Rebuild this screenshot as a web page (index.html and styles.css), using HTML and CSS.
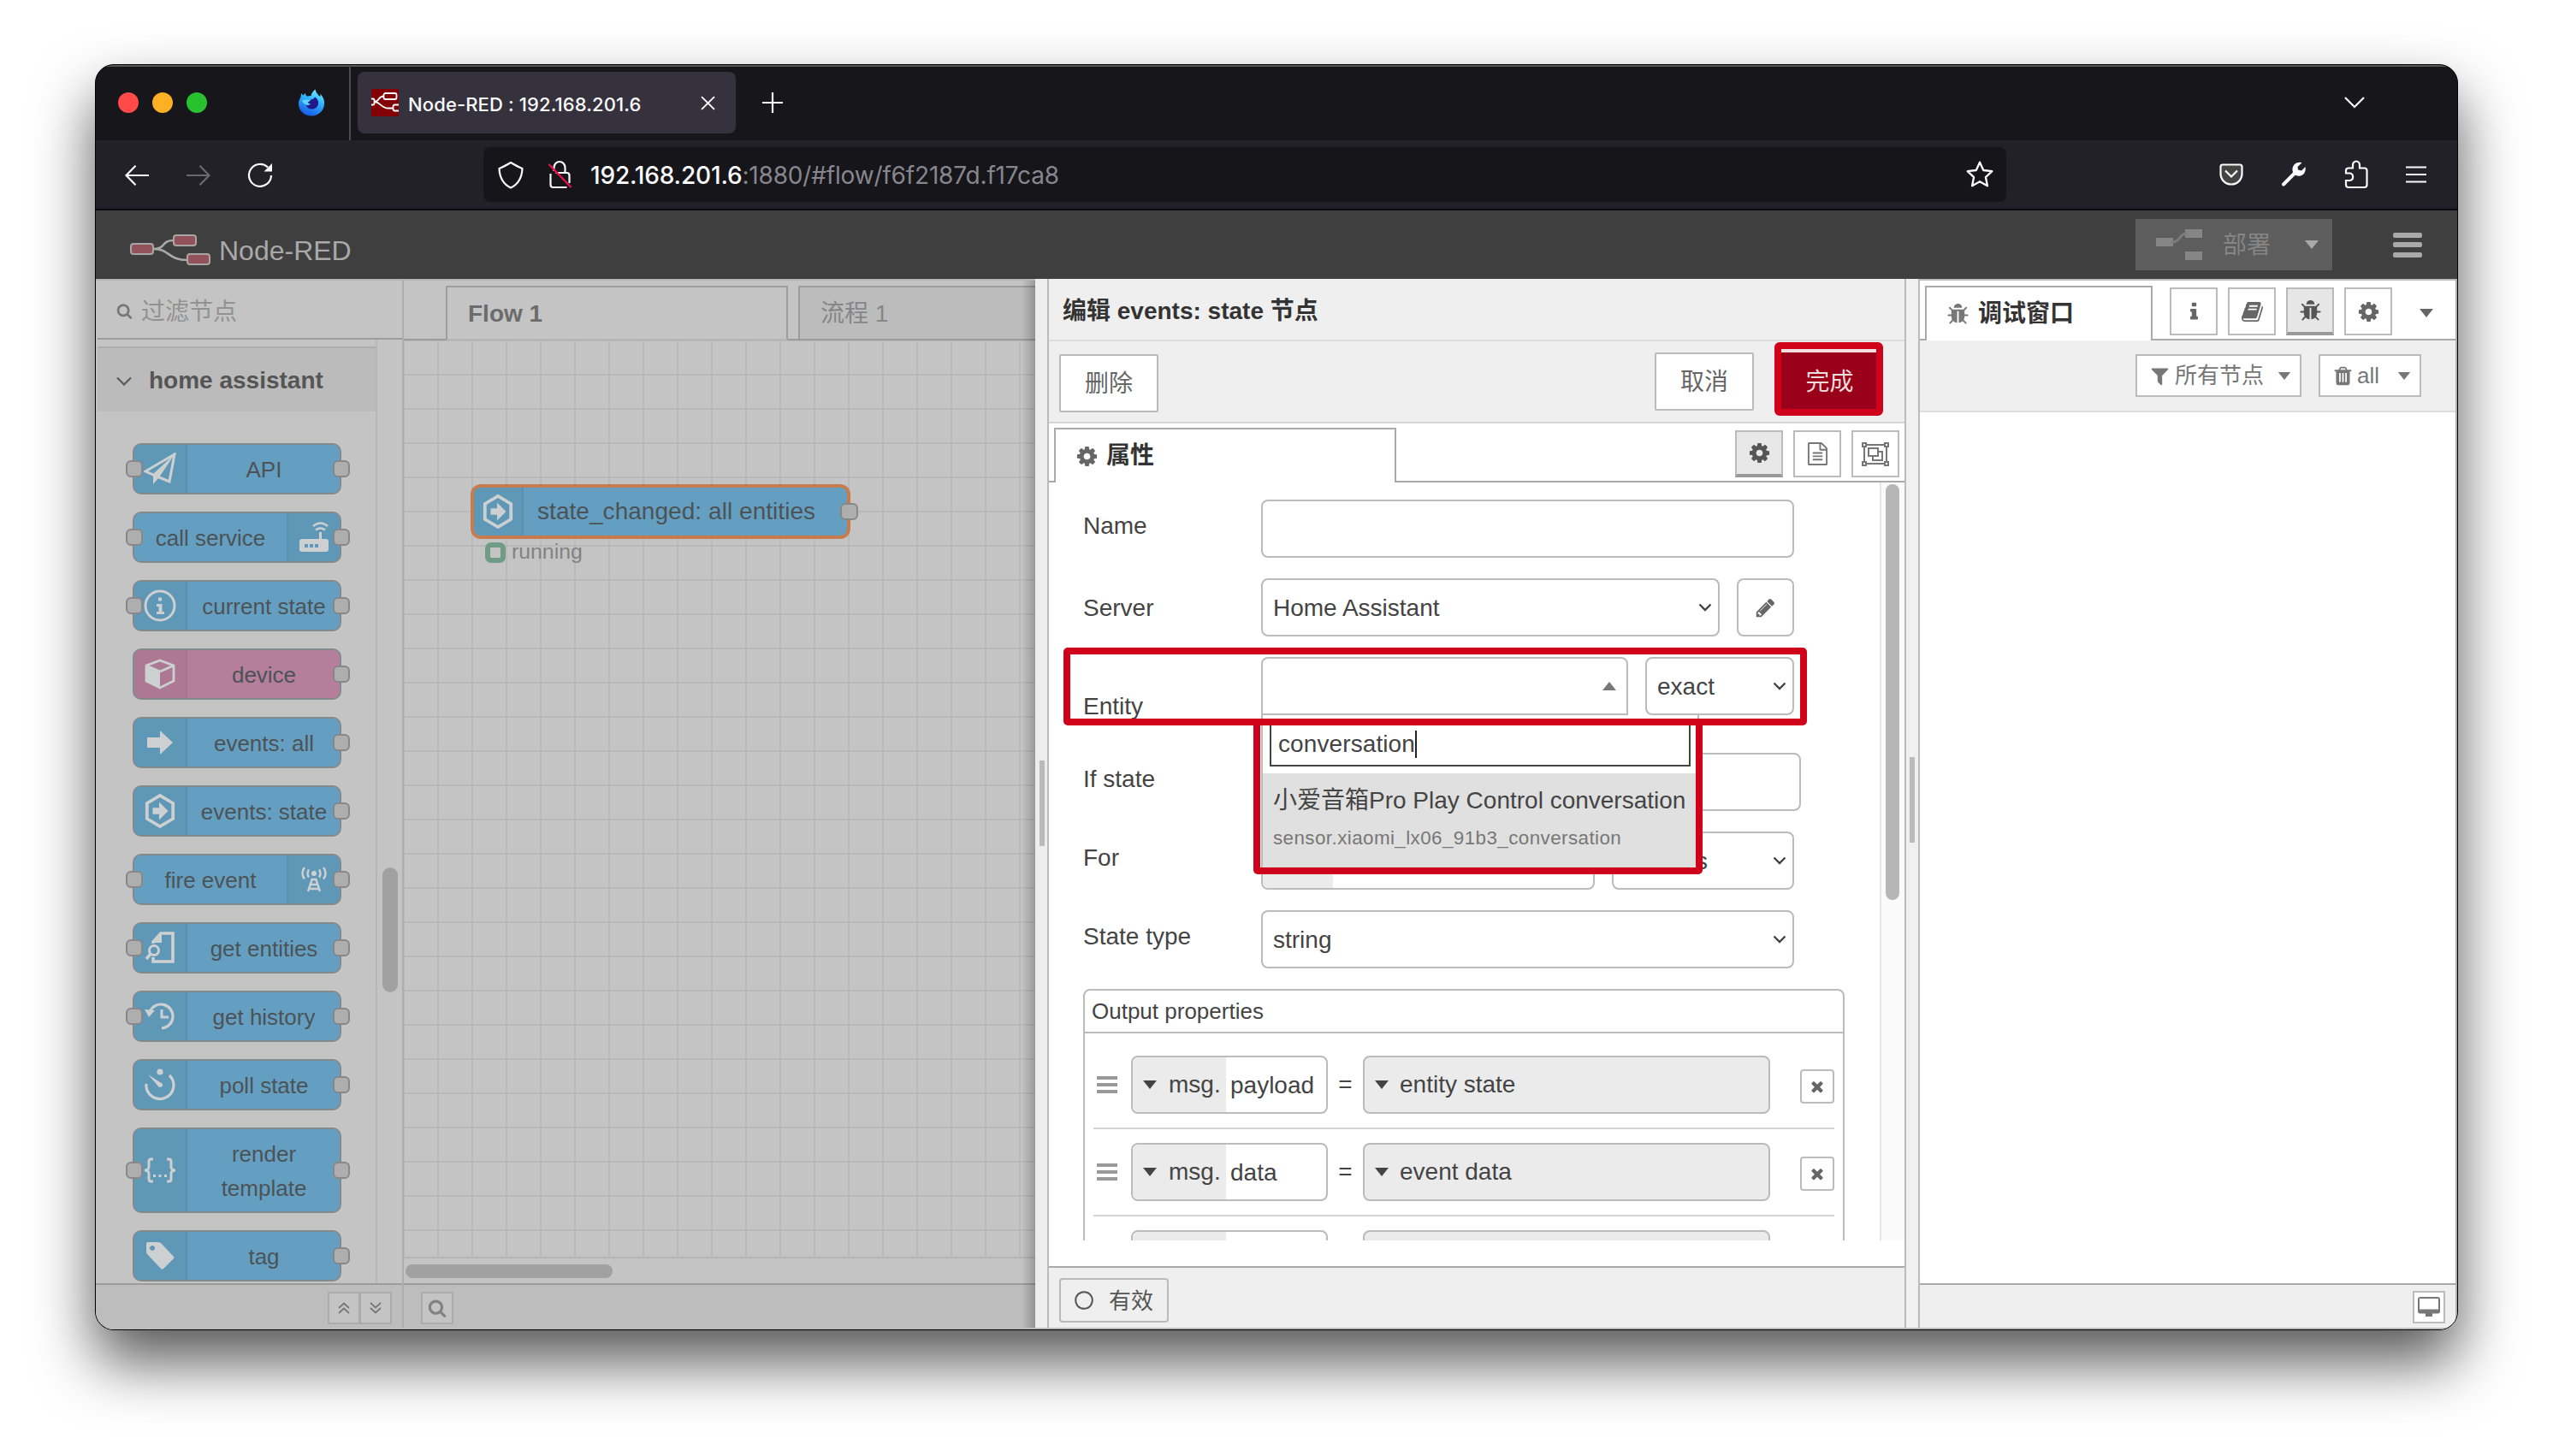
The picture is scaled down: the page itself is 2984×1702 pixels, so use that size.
FILE: index.html
```html
<!DOCTYPE html>
<html lang="zh-CN">
<head>
<meta charset="utf-8">
<title>Node-RED : 192.168.201.6</title>
<link rel="stylesheet" href="styles.css">
</head>
<body>
<svg class="sprite" aria-hidden="true">
  <symbol id="cog" viewBox="0 0 1792 1792"><path d="M1152 896q0-106-75-181t-181-75-181 75-75 181 75 181 181 75 181-75 75-181zm512-109v222q0 12-8 23t-20 13l-185 28q-19 54-39 91 35 50 107 138 10 12 10 25t-9 23q-27 37-99 108t-94 71q-12 0-26-9l-138-108q-44 23-91 38-16 136-29 186-7 28-36 28h-222q-14 0-24.5-8.5t-11.5-21.5l-28-184q-49-16-90-37l-141 107q-10 9-25 9-14 0-25-11-126-114-165-168-7-10-7-23 0-12 8-23 15-21 51-66.5t54-70.5q-27-50-41-99l-183-27q-13-2-21-12.5t-8-23.5v-222q0-12 8-23t19-13l186-28q14-46 39-92-40-57-107-138-10-12-10-24 0-10 9-23 26-36 98.5-107.5t94.5-71.5q13 0 26 10l138 107q44-23 91-38 16-136 29-186 7-28 36-28h222q14 0 24.5 8.5t11.5 21.5l28 184q49 16 90 37l142-107q9-9 24-9 13 0 25 10 129 119 165 170 7 8 7 22 0 12-8 23-15 21-51 66.5t-54 70.5q26 50 41 98l183 28q13 2 21 12.5t8 23.5z"/></symbol>
  <symbol id="bug" viewBox="0 0 1792 1792"><path d="M1696 960q0 26-19 45t-45 19h-224q0 171-67 290l208 209q19 19 19 45t-19 45q-18 19-45 19t-45-19l-198-197q-5 5-15 13t-42 28.5-65 36.5-82 29-97 13v-896h-128v896q-51 0-101.5-13.5t-87-33-66-39-43.5-32.5l-15-14-183 207q-20 21-48 21-24 0-43-16-19-18-20.5-44.5t15.5-46.5l202-227q-58-114-58-274h-224q-26 0-45-19t-19-45 19-45 45-19h224v-294l-173-173q-19-19-19-45t19-45 45-19 45 19l173 173h844l173-173q19-19 45-19t45 19 19 45-19 45l-173 173v294h224q26 0 45 19t19 45zm-480-576h-640q0-133 93.5-226.5t226.5-93.5 226.5 93.5 93.5 226.5z"/></symbol>
  <symbol id="trash" viewBox="0 0 1792 1792"><path d="M704 1376v-704q0-14-9-23t-23-9h-64q-14 0-23 9t-9 23v704q0 14 9 23t23 9h64q14 0 23-9t9-23zm256 0v-704q0-14-9-23t-23-9h-64q-14 0-23 9t-9 23v704q0 14 9 23t23 9h64q14 0 23-9t9-23zm256 0v-704q0-14-9-23t-23-9h-64q-14 0-23 9t-9 23v704q0 14 9 23t23 9h64q14 0 23-9t9-23zm-544-992h448l-48-117q-7-9-17-11h-317q-10 2-17 11zm928 32v64q0 14-9 23t-23 9h-96v948q0 83-47 143.5t-113 60.5h-832q-66 0-113-58.5t-47-141.5v-952h-96q-14 0-23-9t-9-23v-64q0-14 9-23t23-9h309l70-167q15-37 54-63t79-26h320q40 0 79 26t54 63l70 167h309q14 0 23 9t9 23z"/></symbol>
  <symbol id="filter" viewBox="0 0 1792 1792"><path d="M1595 295q17 41-14 70l-493 493v742q0 42-39 59-13 5-25 5-27 0-45-19l-256-256q-19-19-19-45v-486l-493-493q-31-29-14-70 17-39 59-39h1280q42 0 59 39z"/></symbol>
  <symbol id="times" viewBox="0 0 1792 1792"><path d="M1490 1322q0 40-28 68l-136 136q-28 28-68 28t-68-28l-294-294-294 294q-28 28-68 28t-68-28l-136-136q-28-28-28-68t28-68l294-294-294-294q-28-28-28-68t28-68l136-136q28-28 68-28t68 28l294 294 294-294q28-28 68-28t68 28l136 136q28 28 28 68t-28 68l-294 294 294 294q28 28 28 68z"/></symbol>
  <symbol id="search" viewBox="0 0 1792 1792"><path d="M1216 832q0-185-131.5-316.5t-316.5-131.5-316.5 131.5-131.5 316.5 131.5 316.5 316.5 131.5 316.5-131.5 131.5-316.5zm512 832q0 52-38 90t-90 38q-54 0-90-38l-343-342q-179 124-399 124-143 0-273.5-55.5t-225-150-150-225-55.5-273.5 55.5-273.5 150-225 225-150 273.5-55.5 273.5 55.5 225 150 150 225 55.5 273.5q0 220-124 399l343 343q37 37 37 90z"/></symbol>
  <symbol id="pencil" viewBox="0 0 1792 1792"><path d="M491 1536l91-91-235-235-91 91v107h128v128h107zm523-928q0-22-22-22-10 0-17 7l-542 542q-7 7-7 17 0 22 22 22 10 0 17-7l542-542q7-7 7-17zm-54-192l416 416-832 832h-416v-416zm683 96q0 53-37 90l-166 166-416-416 166-165q36-38 90-38 53 0 91 38l235 234q37 39 37 91z"/></symbol>
  <symbol id="info" viewBox="0 0 1792 1792"><path d="M1216 1344v128q0 26-19 45t-45 19h-512q-26 0-45-19t-19-45v-128q0-26 19-45t45-19h64v-384h-64q-26 0-45-19t-19-45v-128q0-26 19-45t45-19h384q26 0 45 19t19 45v576h64q26 0 45 19t19 45zm-128-1152v192q0 26-19 45t-45 19h-256q-26 0-45-19t-19-45v-192q0-26 19-45t45-19h256q26 0 45 19t19 45z"/></symbol>
  <symbol id="book" viewBox="0 0 1792 1792"><path d="M1703 478q40 57 18 129l-275 906q-19 64-76.5 107.5t-122.5 43.5h-923q-77 0-148.5-53.5t-99.5-131.5q-24-67-2-127 0-4 3-27t4-37q1-8-3-21.5t-3-19.5q2-11 8-21t16.5-23.5 16.5-23.5q23-38 45-91.5t30-91.5q3-10 .5-30t-.5-28q3-11 17-28t17-23q21-36 42-92t25-90q1-9-2.5-32t.5-28q4-13 22-30.5t22-22.5q19-26 42.5-84.5t27.5-96.5q1-8-3-25.5t-2-26.5q2-8 9-18t18-23 17-21q8-12 16.5-30.5t15-35 16-36 19.5-32 26.5-23.5 36-11.5 47.5 5.5l-1 3q38-9 51-9h761q74 0 114 56t18 130l-274 906q-36 119-71.5 153.5t-128.5 34.5h-869q-27 0-38 15-11 16-1 43 24 70 144 70h923q29 0 56-15.5t35-41.5l300-987q7-22 5-57 38 15 59 43zm-1064 2q-4 13 2 22.5t20 9.5h608q13 0 25.5-9.5t16.5-22.5l21-64q4-13-2-22.5t-20-9.5h-608q-13 0-25.5 9.5t-16.5 22.5zm-83 256q-4 13 2 22.5t20 9.5h608q13 0 25.5-9.5t16.5-22.5l21-64q4-13-2-22.5t-20-9.5h-608q-13 0-25.5 9.5t-16.5 22.5z"/></symbol>
  <symbol id="file" viewBox="0 0 1792 1792"><path d="M1596 380q28 28 48 76t20 88v1152q0 40-28 68t-68 28h-1344q-40 0-68-28t-28-68v-1600q0-40 28-68t68-28h896q40 0 88 20t76 48zm-444-244v376h376q-10-29-22-41l-313-313q-12-12-41-22zm384 1528v-1024h-416q-40 0-68-28t-28-68v-416h-768v1536h1280zm-1024-864q0-14 9-23t23-9h704q14 0 23 9t9 23v64q0 14-9 23t-23 9h-704q-14 0-23-9t-9-23v-64zm736 224q14 0 23 9t9 23v64q0 14-9 23t-23 9h-704q-14 0-23-9t-9-23v-64q0-14 9-23t23-9h704zm0 256q14 0 23 9t9 23v64q0 14-9 23t-23 9h-704q-14 0-23-9t-9-23v-64q0-14 9-23t23-9h704z"/></symbol>
  <symbol id="caret" viewBox="0 0 16 10"><path d="M0 0h16L8 10z"/></symbol>
  <symbol id="chev" viewBox="0 0 16 10"><path d="M1.5 1.5 8 8l6.5-6.5" fill="none" stroke="currentColor" stroke-width="2.4"/></symbol>
  <symbol id="group" viewBox="0 0 32 28"><g fill="none" stroke="currentColor" stroke-width="2"><path d="M3 3h26v22H3z"/><path d="M8 7h11v9H8z"/><path d="M19 11h5v10H13v-5"/></g><path d="M0 0h6v6H0zM26 0h6v6h-6zM0 22h6v6H0zM26 22h6v6h-6z"/><path d="M2 2h2v2H2zM28 2h2v2h-2zM2 24h2v2H2zM28 24h2v2h-2z" fill="#fff"/></symbol>
  <symbol id="hex" viewBox="0 0 40 44"><path d="M20 3l16 9.500v19L20 41 4 31.500v-19z" fill="none" stroke="currentColor" stroke-width="4"/><path d="M11 18h8v-7l11 11-11 11v-7h-8z"/></symbol>
</svg>

<div class="window">
  <div class="tabbar">
    <i class="dot red"></i><i class="dot amber"></i><i class="dot green"></i>
    <svg class="fox" viewBox="0 0 32 32"><defs><linearGradient id="fx" x1=".7" y1="0" x2=".3" y2="1"><stop offset="0" stop-color="#6ff0ff"/><stop offset=".4" stop-color="#2fb4ff"/><stop offset="1" stop-color="#1557e6"/></linearGradient></defs><path d="M20.500 0.500c.5 3 2 4.500 3.500 6.500.8 1 1.500 1.500 2.500 1.500.3-1.200 0-2-.4-3C29.500 9 31.500 13 31 18c-.8 8-7 13.500-15 13.500S1 25.500 1 17.500C1 14.500 2 12 3.500 9.500c0-1.500.3-3 1-4.500.5 1.200 1.200 2 2 2.500.8-1.200 1.500-2 2.500-2.500 0 1.500.5 2.500 1.500 3.500 1.500.2 3.500-.2 5-.5.5-3 2.500-5.500 5-7.500z" fill="url(#fx)"/><path d="M15 12.500c2-.2 4-1 5-3 3 1.500 4.500 5 4 8-.6 3.500-3.600 6-7.500 6-3.500 0-6-2-6.800-4.800 2 .8 4 .5 5.800-1-2-.3-3-1.500-3.800-3 1 0 2.300-.8 3.300-2.200z" fill="#211a86"/><path d="M5 13.500c3-1.500 6-.8 10-.5-1 1.800-2.500 2-3.500 2.200 0 1.500 1 2.300 2.500 2.800-3 1.500-7 .5-9-4.500z" fill="#66d3ff"/></svg>
    <div class="tab">
      <svg class="favicon" viewBox="0 0 32 32"><rect width="32" height="32" rx="2" fill="#820006"/><g fill="none" stroke="#fff" stroke-width="1.800"><rect x="14.500" y="5" width="15" height="7" rx="2"/><path d="M0 11.500h2q1.500 0 1.500 1.500v4q0 1.500-1.500 1.500H0M3.500 15c6.500 0 4-6.500 11-6.500M3.500 15c7 0 8 7.500 16 7.500h6"/><path d="M32 18.500h-4.500q-2 0-2 2v3q0 2 2 2H32"/></g></svg>
      <span class="tab-title">Node-RED : 192.168.201.6</span>
      <svg class="tab-x" viewBox="0 0 16 16"><path d="M1 1l14 14M15 1 1 15" stroke="#fbfbfe" stroke-width="1.800"/></svg>
    </div>
    <svg class="plus" viewBox="0 0 24 24"><path d="M12 0v24M0 12h24" stroke="#fbfbfe" stroke-width="2.200"/></svg>
    <svg class="alltabs" viewBox="0 0 24 14"><path d="M1 1l11 11L23 1" fill="none" stroke="#fbfbfe" stroke-width="2.200"/></svg>
  </div>
  <div class="navbar">
    <svg class="arrow" viewBox="0 0 28 24"><path d="M28 12H2M12.500 .8 1.500 12l11 11.200" fill="none" stroke="#fbfbfe" stroke-width="2.200"/></svg>
    <svg class="arrow fwd" viewBox="0 0 28 24"><path d="M0 12h26M15.500 .8l11 11.200-11 11.200" fill="none" stroke="#6a6972" stroke-width="2.200"/></svg>
    <svg class="reload" viewBox="0 0 30 30"><path d="M24 6.500A13 13 0 1 0 28 16" fill="none" stroke="#fbfbfe" stroke-width="2.200"/><path d="M29 2v9.500H19.500z" fill="#fbfbfe"/></svg>
    <div class="urlbar">
      <svg class="shield" viewBox="0 0 30 32"><path d="M15 1.500C10 4.500 6.500 6.500 1.500 8.500 2 20 6.500 27 15 31 23.500 27 28 20 28.500 8.500 23.500 6.500 20 4.500 15 1.500z" fill="none" stroke="#fbfbfe" stroke-width="2.200" stroke-linejoin="round"/></svg>
      <svg class="lock" viewBox="0 0 28 34"><path d="M7 13V9a6.500 7 0 0 1 13 0v5M3 16v13q0 3 3 3h16M9 15h13q3 0 3 3v9" fill="none" stroke="#fbfbfe" stroke-width="2.200"/><path d="M1 5l26 27" stroke="#e8114b" stroke-width="2.400"/></svg>
      <span class="url"><b>192.168.201.6</b>:1880/#flow/f6f2187d.f17ca8</span>
      <svg class="star" viewBox="0 0 32 32"><path d="M16 2.500l4 8.800 9.500 1.100-7 6.500 1.900 9.600L16 23.800l-8.400 4.700 1.900-9.600-7-6.500 9.500-1.100z" fill="none" stroke="#fbfbfe" stroke-width="2.200" stroke-linejoin="round"/></svg>
    </div>
    <div class="navicons">
      <svg width="28" height="26" viewBox="0 0 28 26" fill="none" stroke="#fbfbfe" stroke-width="2.200"><path d="M4 1.500h20q2.500 0 2.500 2.500v8C26.500 19 21 24.500 14 24.500S1.500 19 1.500 12V4q0-2.500 2.500-2.500z"/><path d="M7 8.500l7 7 7-7"/></svg>
      <svg width="30" height="30" viewBox="0 0 30 30"><path d="M3 26.500 16 13.500" stroke="#fbfbfe" stroke-width="4" stroke-linecap="round"/><path d="M24.500 1.200C19 -.5 13 3.500 13.500 10c.5 5 5 7.500 9 6.500 4.500-1 7-5.500 6-10.500L24 10.500l-4-1-.5-3.500z" fill="#fbfbfe"/></svg>
      <svg width="28" height="34" viewBox="0 0 28 34"><path d="M2 14V12.500q0-3 3-3h5V6a4 4.500 0 0 1 8 0v3.500h5.500q3 0 3 3V29q0 3-3 3H5q-3 0-3-3v-5h4.500a4.300 4.300 0 0 0 0-8.500H2z" fill="none" stroke="#fbfbfe" stroke-width="2.200"/></svg>
      <svg width="24" height="20" viewBox="0 0 24 20"><path d="M0 1.500h24M0 10h24M0 18.500h24" stroke="#fbfbfe" stroke-width="2.200"/></svg>
    </div>
  </div>

  <header class="header">
    <svg class="logo" width="96" height="38" viewBox="0 0 96 38"><path d="M28 17c14 0 8-10 23-10M28 17c18 0 16 13 39 13" fill="none" stroke="#a9a9a9" stroke-width="2.600"/><g fill="#91525a" stroke="#a9a5a5" stroke-width="2"><rect x="1" y="11" width="26" height="12" rx="3"/><rect x="51" y="1" width="26" height="12" rx="3"/><rect x="67" y="23" width="26" height="12" rx="3"/></g></svg>
    <span class="brand">Node-RED</span>
    <div class="deploy">
      <svg width="54" height="36" viewBox="0 0 54 36" fill="#7c7c7c"><path d="M0 10h20v10H0zM34 0h20v10H34zM34 26h20v10H34z"/><path d="M18 15c12 0 8-10 18-10" fill="none" stroke="#7c7c7c" stroke-width="3"/></svg>
      <span>部署</span>
      <svg class="dcaret" width="16" height="10"><use href="#caret"/></svg>
    </div>
    <div class="burger"><i></i><i></i><i></i></div>
  </header>

  <div class="main">
    <aside class="palette">
      <div class="psearch"><svg width="19" height="19"><use href="#search"/></svg><span>过滤节点</span></div>
      <div class="pbody">
        <div class="plist">
          <div class="cat"><svg width="18" height="11" viewBox="0 0 18 11"><path d="M1 1.500l8 8 8-8" fill="none" stroke="#5a5a5a" stroke-width="2.200"/></svg><b>home assistant</b></div>
          <div class="nodes">
            <div class="node"><i class="port in"></i><div class="nicon"><svg width="38" height="38" viewBox="0 0 38 38"><path d="M2 22 36 2l-6 32-12-5z" fill="none" stroke="currentColor" stroke-width="3"/><path d="M36 2 18 29l-7 8V25z"/></svg></div><span>API</span><i class="port out"></i></div>
            <div class="node right"><i class="port in"></i><div class="nicon"><svg width="36" height="36" viewBox="0 0 36 36"><rect x="1" y="20" width="34" height="15" rx="3"/><path d="M24 12h3v9h-3z"/><path d="M7 26h4v4H7zM13 26h4v4h-4zM19 26h4v4h-4z" fill="#5f98b8"/><path d="M17 5q8.500-7 17 0M20 9.500q5.500-4 11 0" fill="none" stroke="currentColor" stroke-width="2.400"/></svg></div><span>call service</span><i class="port out"></i></div>
            <div class="node"><i class="port in"></i><div class="nicon"><svg width="38" height="38" viewBox="0 0 38 38"><circle cx="19" cy="19" r="17" fill="none" stroke="currentColor" stroke-width="3"/><path d="M17 9.500h4v4h-4zM15 17h6.500v9H24v3h-9v-3h2.500v-6H15z"/></svg></div><span>current state</span><i class="port out"></i></div>
            <div class="node pink"><div class="nicon"><svg width="38" height="38" viewBox="0 0 38 38"><path d="M19 3 35 9v18L19 35 3 27V9zM3 9l16 7 16-7" fill="none" stroke="currentColor" stroke-width="2.800"/><path d="M2 9l17 7v20L2 28z" transform="matrix(1 0 0 1 0 0)"/></svg></div><span>device</span><i class="port out"></i></div>
            <div class="node"><div class="nicon"><svg width="32" height="30" viewBox="0 0 32 30"><path d="M1 9h15V1l15 14-15 14v-8H1z"/></svg></div><span>events: all</span><i class="port out"></i></div>
            <div class="node"><div class="nicon"><svg width="38" height="42"><use href="#hex"/></svg></div><span>events: state</span><i class="port out"></i></div>
            <div class="node right"><i class="port in"></i><div class="nicon"><svg width="32" height="30" viewBox="0 0 32 30"><circle cx="16" cy="8" r="3"/><g fill="none" stroke="currentColor" stroke-width="2.400"><path d="M10 3.500q-3 4.500 0 9M22 3.500q3 4.500 0 9M5 1q-5 7 0 13.500M27 1q5 7 0 13.500M14 14 9 29M18 14l5 15M12 21h8M11 26h10M14 15h4"/></g></svg></div><span>fire event</span><i class="port out"></i></div>
            <div class="node"><i class="port in"></i><div class="nicon"><svg width="36" height="38" viewBox="0 0 36 38"><path d="M10 14V12l9-10h14v33H10v-5" fill="none" stroke="currentColor" stroke-width="3.600"/><path d="M9 13 20 1v12z"/><circle cx="11" cy="22" r="5.500" fill="none" stroke="currentColor" stroke-width="3"/><path d="M7 26l-5 6" stroke="currentColor" stroke-width="3.600"/></svg></div><span>get entities</span><i class="port out"></i></div>
            <div class="node"><i class="port in"></i><div class="nicon"><svg width="36" height="34" viewBox="0 0 36 34"><path d="M6 12A14 14 0 1 1 20 31" fill="none" stroke="currentColor" stroke-width="3.200"/><path d="M0 9l12 1-7 8z"/><path d="M20 9v9h8" fill="none" stroke="currentColor" stroke-width="3"/></svg></div><span>get history</span><i class="port out"></i></div>
            <div class="node"><div class="nicon"><svg width="38" height="38" viewBox="0 0 38 38"><path d="M3 18a16 16 0 1 0 27-10" fill="none" stroke="currentColor" stroke-width="3.200"/><circle cx="19" cy="4" r="3.600"/><path d="M5 7l17 11q1 4-4 4z"/></svg></div><span>poll state</span><i class="port out"></i></div>
            <div class="node tall"><i class="port in"></i><div class="nicon"><svg width="38" height="30" viewBox="0 0 38 30"><path d="M11 2H8.500Q6 2 6 5v6q0 4-5 4 5 0 5 4v6q0 3 2.500 3H11M27 2h2.500Q32 2 32 5v6q0 4 5 4-5 0-5 4v6q0 3-2.500 3H27" fill="none" stroke="currentColor" stroke-width="3"/><path d="M11 20h3v3h-3zM17.500 20h3v3h-3zM24 20h3v3h-3z"/></svg></div><span>render<br>template</span><i class="port out"></i></div>
            <div class="node"><div class="nicon"><svg width="34" height="34" viewBox="0 0 34 34"><path fill-rule="evenodd" d="M1 3q0-2 2-2h11q2 0 4 1l15 16q1 1 0 2L21 32q-1 1-3 0L2 15q-1-1-1-3zM8 5a3 3 0 1 0 .1 0z"/></svg></div><span>tag</span><i class="port out"></i></div>
          </div>
        </div>
        <div class="pscroll"><i></i></div>
      </div>
      <div class="pfoot">
        <div class="mini"><svg width="14" height="14" viewBox="0 0 14 14"><path d="M1 7l6-5.500L13 7M1 13l6-5.500 6 5.500" fill="none" stroke="#777" stroke-width="1.800"/></svg></div>
        <div class="mini"><svg width="14" height="14" viewBox="0 0 14 14"><path d="M1 1l6 5.500L13 1M1 7l6 5.500L13 7" fill="none" stroke="#777" stroke-width="1.800"/></svg></div>
      </div>
    </aside>

    <section class="workspace">
      <div class="wtabs"><div class="wt on">Flow 1</div><div class="wt off">流程 1</div></div>
      <div class="canvas">
        <div class="cnode"><div class="cicon"><svg width="38" height="42"><use href="#hex"/></svg></div><span>state_changed: all entities</span><i class="port"></i></div>
        <div class="status"><i></i><span>running</span></div>
      </div>
      <div class="hscroll"><i></i></div>
      <div class="wfoot"><div class="mini"><svg width="22" height="22"><use href="#search"/></svg></div></div>
      <div class="wshade"></div>
    </section>

    <div class="grip tray-grip"><i></i></div>

    <section class="tray">
      <div class="tray-title">编辑 events: state 节点</div>
      <div class="tray-bar">
        <div class="btn del">删除</div><div class="btn cancel">取消</div><div class="btn done">完成</div>
      </div>
      <div class="tray-tabs">
        <div class="ttab"><svg width="27" height="27"><use href="#cog"/></svg><b>属性</b></div>
        <div class="tbtn on"><svg width="27" height="27"><use href="#cog"/></svg></div>
        <div class="tbtn"><svg width="27" height="27"><use href="#file"/></svg></div>
        <div class="tbtn"><svg width="32" height="28"><use href="#group"/></svg></div>
      </div>
      <div class="tray-body">
        <div class="form">
          <div class="row"><label>Name</label><div class="field w-full"></div></div>
          <div class="row server"><label>Server</label><div class="field w-server"><span>Home Assistant</span><svg width="16" height="10"><use href="#chev"/></svg></div><div class="field edit"><svg width="25" height="25"><use href="#pencil"/></svg></div></div>
          <div class="row entity"><label>Entity</label><div class="field w-entity"><svg width="16" height="10" viewBox="0 0 16 10"><path d="M8 0l8 10H0z"/></svg></div><div class="field w-exact"><span>exact</span><svg width="16" height="10"><use href="#chev"/></svg></div></div>
          <div class="row ifstate"><label>If state</label><div class="field w-if"></div></div>
          <div class="row"><label>For</label><div class="field w-for"><i></i></div><div class="field w-unit"><span>minutes</span><svg width="16" height="10"><use href="#chev"/></svg></div></div>
          <div class="row"><label>State type</label><div class="field w-full"><span>string</span><svg width="16" height="10"><use href="#chev"/></svg></div></div>
          <div class="outputs">
            <div class="ohead">Output properties</div>
            <div class="orow"><div class="handle"><i></i><i></i><i></i></div><div class="prop"><div class="ptype"><svg width="16" height="10"><use href="#caret"/></svg>msg.</div><span>payload</span></div><em>=</em><div class="val"><svg width="16" height="10"><use href="#caret"/></svg>entity state</div><div class="rm"><svg width="20" height="20"><use href="#times"/></svg></div></div>
            <div class="orow"><div class="handle"><i></i><i></i><i></i></div><div class="prop"><div class="ptype"><svg width="16" height="10"><use href="#caret"/></svg>msg.</div><span>data</span></div><em>=</em><div class="val"><svg width="16" height="10"><use href="#caret"/></svg>event data</div><div class="rm"><svg width="20" height="20"><use href="#times"/></svg></div></div>
            <div class="orow"><div class="handle"></div><div class="prop"><div class="ptype"></div></div><em></em><div class="val"></div></div>
          </div>
          <div class="dropdown">
            <div class="dsearch"><span>conversation</span><i></i></div>
            <div class="option"><span>小爱音箱Pro Play Control conversation</span><small>sensor.xiaomi_lx06_91b3_conversation</small></div>
          </div>
          <div class="mark mark-entity"></div>
          <div class="mark mark-drop"></div>
        </div>
        <div class="fscroll"><i></i></div>
      </div>
      <div class="tray-foot"><div class="enabled"><svg width="22" height="22" viewBox="0 0 22 22"><circle cx="11" cy="11" r="9.800" fill="none" stroke="#555" stroke-width="2"/></svg><span>有效</span></div></div>
    </section>

    <div class="grip side-grip"><i></i></div>

    <aside class="sidebar">
      <div class="stabs">
        <div class="stab"><svg width="27" height="27"><use href="#bug"/></svg><b>调试窗口</b></div>
        <div class="sbtn first"><svg width="25" height="25"><use href="#info"/></svg></div>
        <div class="sbtn"><svg width="27" height="27"><use href="#book"/></svg></div>
        <div class="sbtn on"><svg width="27" height="27"><use href="#bug"/></svg></div>
        <div class="sbtn"><svg width="27" height="27"><use href="#cog"/></svg></div>
        <svg class="scaret" width="16" height="10"><use href="#caret"/></svg>
      </div>
      <div class="sbar">
        <div class="fbtn nodesf"><svg width="25" height="25"><use href="#filter"/></svg><span>所有节点</span><svg width="16" height="9"><use href="#caret"/></svg></div>
        <div class="fbtn allf"><svg width="25" height="25"><use href="#trash"/></svg><span>all</span><svg width="16" height="9"><use href="#caret"/></svg></div>
      </div>
      <div class="sbody"></div>
      <div class="sfoot"><div class="monitor"><svg width="26" height="24" viewBox="0 0 26 24"><path fill-rule="evenodd" d="M3 0h20q3 0 3 3v14q0 2.500-3 2.500h-6V23H9v-3.500H3Q0 19.500 0 17V3q0-3 3-3zM2 2v12.500h22V2z"/></svg></div></div>
    </aside>
  </div>
</div>
</body>
</html>
```

FILE: styles.css
```css
* { box-sizing: border-box; }
body {
  margin: 0; width: 2984px; height: 1702px; overflow: hidden; background: #fff;
  font: 28px/34px "Liberation Sans", "Noto Sans CJK SC", sans-serif;
  color: #444; white-space: nowrap; display: flex;
}
svg { display: block; flex: none; fill: currentColor; }
i { display: block; flex: none; }
.sprite { position: absolute; width: 0; height: 0; }

.window {
  width: 2762px; height: 1480px; margin: 75px 0 0 111px; border: 1px solid #000;
  border-radius: 22px; overflow: hidden; display: flex; flex-direction: column;
  box-shadow: 0 37px 70px rgba(0, 0, 0, .66); background: #16161b;
}

/* browser chrome */
.tabbar { height: 88px; flex: none; display: flex; align-items: center; background: #17171b; box-shadow: inset 0 2px #555758; padding-left: 26px; }
.dot { width: 24px; height: 24px; border-radius: 50%; margin-right: 16px; }
.red { background: #fe4a48; } .amber { background: #fdb024; } .green { background: #28c231; }
.fox { width: 32px; height: 32px; margin-left: 90px; margin-right: 29px; }
.tab { width: 442px; height: 72px; margin-left: 9px; background: #35323d; border-radius: 8px; display: flex; align-items: center; padding-left: 16px; position: relative; }
.tabbar .fox + .tab::before { content: ""; position: absolute; left: -10px; top: -8px; width: 2px; height: 88px; background: #4c4b52; }
.favicon { width: 32px; height: 32px; }
.tab-title { margin-left: 11px; width: 276px; font: 500 22px/30px Inter, sans-serif; color: #fbfbfe; padding-top: 3px; letter-spacing: .12px; }
.tab-x { width: 17px; height: 17px; margin-left: 66px; }
.plus { width: 24px; height: 24px; margin-left: 31px; }
.alltabs { width: 24px; height: 14px; margin-left: auto; margin-right: 108px; }

.navbar { height: 82px; flex: none; display: flex; align-items: center; background: #22212a; border-bottom: 2px solid #0c0c0e; padding-left: 34px; }
.arrow { width: 28px; height: 24px; margin-top: 2px; }
.fwd { margin-left: 44px; }
.reload { width: 30px; height: 30px; margin-left: 43px; }
.urlbar { width: 1780px; height: 64px; margin-left: 246px; background: #16161a; border-radius: 8px; display: flex; align-items: center; padding-left: 17px; }
.shield { width: 30px; height: 33px; }
.lock { width: 29px; height: 34px; margin-left: 28px; }
.url { width: 600px; margin-left: 21px; font: 28px/34px Inter, sans-serif; color: #87868e; letter-spacing: -.17px; padding-top: 1px; }
.url b { font-weight: 500; color: #fbfbfe; }
.star { width: 34px; height: 34px; margin-left: auto; margin-right: 14px; }
.navicons { margin-left: 249px; display: flex; align-items: center; gap: 44px; }

.header { height: 80px; flex: none; background: #3f3f3f; display: flex; align-items: center; padding-left: 40px; }
.logo { margin-top: 14px; }
.brand { font-size: 32px; line-height: 40px; color: #a9a9a9; margin: 14px 0 0 8px; }
.deploy { width: 230px; height: 60px; margin-left: auto; background: #5d5d5d; color: #868686; display: flex; align-items: center; padding-left: 24px; }
.deploy span { margin: 2px 0 0 24px; }
.dcaret { margin-left: 40px; color: #a9a9a9; }
.burger { width: 34px; margin: 0 41px 0 71px; }
.burger i { height: 6px; border-radius: 2px; background: #a9a9a9; margin-bottom: 5.500px; }
.burger i:last-child { margin: 0; }

.main { flex: 1; min-height: 0; display: flex; border-right: 2px solid #b0b0b0; border-bottom: 2px solid #bbb; background: #c4c4c4; }

/* palette */
.palette { width: 360px; flex: none; border-right: 2px solid #adadad; border-top: 2px solid #b4b4b4; display: flex; flex-direction: column; padding-left: 2px; }
.psearch { height: 69px; flex: none; border-bottom: 2px solid #9c9c9c; display: flex; align-items: center; padding: 4px 0 0 22px; color: #777; }
.psearch span { margin: 2px 0 0 10px; color: #929292; }
.pbody { height: 1103px; flex: none; display: flex; overflow: hidden; }
.plist { width: 327px; border-right: 2px solid #b7b7b7; padding-top: 8px; }
.cat { height: 76px; border-top: 2px solid #adadad; background: #bbb; display: flex; align-items: center; padding: 2px 0 0 22px; color: #555; }
.cat b { margin-left: 20px; }
.nodes { padding: 37px 0 0 41px; display: flex; flex-direction: column; gap: 20px; }
.node { position: relative; width: 244px; height: 60px; flex: none; border: 2px solid #828a8e; border-radius: 10px; background: #649fc1; display: flex; font-size: 26px; color: #4c5357; }
.node span { flex: 1; align-self: center; text-align: center; line-height: 40px; padding: 1px 0 0 1px; }
.nicon { width: 62px; background: #5f97b7; border-right: 2px solid #5a8fad; border-radius: 8px 0 0 8px; display: flex; align-items: center; justify-content: center; color: #cdd0d1; }
.right { flex-direction: row-reverse; }
.right span { padding-left: 0; }
.right .nicon { border-right: 0; border-left: 2px solid #5a93b3; border-radius: 0 8px 8px 0; }
.pink { background: #b57e9b; } .pink .nicon { background: #ac7893; border-color: #a3728c; }
.tall { height: 100px; }
.port { position: absolute; width: 20px; height: 20px; top: calc(50% - 10px); border: 2px solid #888; border-radius: 6px; background: #aeaeae; }
.port.in { left: -10px; } .port.out { right: -12px; }
.pscroll { padding: 617px 0 0 6px; }
.pscroll i { width: 18px; height: 146px; border-radius: 9px; background: #a1a1a1; }
.pfoot { flex: 1; border-top: 2px solid #9c9c9c; background: #bdbdbd; margin-left: -2px; display: flex; justify-content: flex-end; padding: 8px 12px 0 0; }
.mini { width: 38px; height: 38px; border: 2px solid #acacac; background: #c4c4c4; color: #828282; display: flex; align-items: center; justify-content: center; }
.mini + .mini { margin-left: -1px; }

/* workspace */
.workspace { width: 738px; flex: none; position: relative; display: flex; flex-direction: column; overflow: hidden; border-top: 2px solid #b4b4b4; }
.wtabs { height: 70px; flex: none; display: flex; padding: 6px 0 0 49px; background: linear-gradient(#9c9c9c, #9c9c9c) 0 68px / 100% 2px no-repeat; }
.wt { width: 400px; height: 64px; flex: none; border: 2px solid #9c9c9c; padding: 14px 0 0 24px; color: #868686; }
.on.wt { border-bottom-color: #b5b5b5; background: #c4c4c4; font-weight: bold; color: #6c6c6c; }
.off.wt { margin-left: 12px; background: #bcbcbc; }
.canvas { height: 1073px; flex: none; position: relative;
  background: repeating-linear-gradient(90deg, #b9b9b9 0 1px, transparent 1px 39px, #b9b9b9 39px 40px), repeating-linear-gradient(#b9b9b9 0 1px, transparent 1px 39px, #b9b9b9 39px 40px); border-bottom: 2px solid #b5b5b5; }
.cnode { position: absolute; left: 78px; top: 168px; width: 444px; height: 64px; border: 4px solid #c67c4e; border-radius: 12px; background: #649fc1; display: flex; align-items: center; color: #4c5357; }
.cicon { width: 58px; height: 56px; background: #5f97b7; border-right: 2px solid #5a8fad; border-radius: 8px 0 0 8px; display: flex; align-items: center; justify-content: center; color: #cdd0d1; }
.cnode span { margin-left: 16px; letter-spacing: .05px; }
.cnode .port { right: -13px; width: 21px; }
.status { position: absolute; left: 95px; top: 230px; display: flex; align-items: center; color: #828282; }
.status i { width: 24px; height: 24px; border: 6px solid #709c87; border-radius: 7px; }
.status span { margin: 0 0 1px 7px; font-size: 24.800px; }
.hscroll { height: 29px; flex: none; padding: 7px 0 0 2px; }
.hscroll i { width: 242px; height: 16px; border-radius: 8px; background: #a1a1a1; }
.wfoot { flex: 1; border-top: 2px solid #9c9c9c; background: #bdbdbd; padding: 8px 0 0 20px; }
.wshade { position: absolute; right: 0; top: 0; width: 16px; height: 1226px; background: linear-gradient(90deg, transparent, rgba(0, 0, 0, .22)); }

.grip { width: 16px; flex: none; background: #ededed; border-right: 2px solid #bbb; }
.grip i { width: 6px; height: 100px; background: #bababa; margin: 563px 0 0 5px; }
.side-grip { width: 18px; border-left: 2px solid #bbb; background: #f0f0f0; }
.side-grip i { margin: 559px 0 0 4px; }

/* edit tray */
.tray { width: 1000px; flex: none; background: #fff; display: flex; flex-direction: column; }
.tray-title { height: 73px; flex: none; background: #efefef; border-bottom: 2px solid #ddd; padding: 21px 0 0 16px; font-weight: bold; color: #333; }
.tray-bar { height: 96px; flex: none; background: #efefef; border-bottom: 2px solid #d5d5d5; display: flex; padding-left: 12px; color: #666; }
.btn { width: 116px; height: 68px; border: 2px solid #bbb; border-radius: 2px; background: #fff; text-align: center; line-height: 66px; }
.del { margin-top: 15px; }
.cancel { margin: 13px 24px 0 auto; }
.done { width: 127px; height: 86px; margin: 1px 25px 0 0; border: 8px solid #d0021b; border-radius: 6px; background: #9a0019; color: #eddbdd; box-shadow: inset 0 4px #f3dfe1; line-height: 77px; padding-left: 2px; }
.tray-tabs { height: 69px; flex: none; display: flex; padding: 5px 6px 0; background: linear-gradient(#aaa, #aaa) 0 67px / 100% 2px no-repeat; }
.ttab { width: 400px; height: 64px; border: 2px solid #aaa; border-bottom: 0; background: #fff; display: flex; align-items: center; padding-left: 23px; color: #666; margin-right: auto; }
.ttab b { color: #333; margin-left: 9px; }
.tbtn { width: 56px; height: 55px; margin: 3px 0 0 12px; border: 2px solid #bbb; display: flex; align-items: center; justify-content: center; color: #777; }
.tbtn.on { background: #e8e8e8; border-bottom: 4px solid #999; color: #555; }
.tray-body { height: 886px; flex: none; display: flex; overflow: hidden; }
.form { width: 971px; flex: none; position: relative; padding: 20px 0 0 40px; }
.row { height: 68px; display: flex; margin-bottom: 24px; }
.entity { margin-bottom: 44px; }
.row label { width: 208px; flex: none; padding-top: 14px; }
.server label { padding-top: 18px; }
.entity label { padding-top: 41px; }
.field { height: 68px; border: 2px solid #bbb; border-radius: 8px; background: #fff; display: flex; align-items: center; justify-content: space-between; padding: 0 7px 0 12px; overflow: hidden; }
.field span { padding-top: 2px; }
.w-full { width: 623px; }
.w-server { width: 536px; }
.edit { width: 67px; margin-left: 20px; padding: 0; justify-content: center; color: #666; }
.w-entity { width: 429px; border-radius: 8px 8px 0 0; justify-content: flex-end; padding-right: 12px; color: #777; }
.w-exact { width: 174px; margin-left: 20px; }
.w-if { width: 631px; }
.w-for { width: 390px; padding: 0; }
.w-for i { width: 82px; height: 100%; background: #ebebeb; }
.w-unit { width: 213px; margin-left: 20px; }
.outputs { width: 890px; height: 400px; border: 2px solid #bbb; border-radius: 8px; }
.ohead { height: 50px; border-bottom: 2px solid #bbb; font-size: 26px; line-height: 46px; padding: 1px 0 0 8px; }
.orow { height: 102px; margin: 0 10px; border-bottom: 2px solid #d4d4d4; display: flex; align-items: center; }
.ohead + .orow { height: 112px; padding-top: 10px; }
.handle { width: 24px; margin: 0 16px 0 4px; }
.handle i { height: 4px; background: #999; margin-bottom: 4px; }
.handle i:last-child { margin: 0; }
.prop { width: 230px; height: 68px; border: 2px solid #bbb; border-radius: 8px; display: flex; align-items: center; overflow: hidden; }
.ptype { width: 109px; height: 100%; background: #ebebeb; display: flex; align-items: center; padding-left: 12px; }
.ptype svg { margin-right: 14px; }
.prop span { padding: 2px 0 0 5px; }
.orow em { width: 41px; text-align: center; font-style: normal; }
.val { width: 476px; height: 68px; border: 2px solid #bbb; border-radius: 8px; background: #ebebeb; display: flex; align-items: center; padding-left: 12px; }
.val svg { margin-right: 13px; }
.rm { width: 40px; height: 40px; margin: 4px 0 0 35px; border: 2px solid #bbb; border-radius: 4px; display: flex; align-items: center; justify-content: center; color: #666; }

.dropdown { position: absolute; left: 248px; top: 272px; width: 512px; height: 178px; background: #fff; border: 2px solid #bbb; border-top: 0; }
.dsearch { width: 492px; height: 52px; margin: 8px 0 0 8px; border: 2px solid #444; display: flex; align-items: center; padding-left: 8px; }
.dsearch span { letter-spacing: .1px; }
.dsearch i { width: 2px; height: 32px; background: #222; }
.option { height: 110px; margin-top: 8px; background: #e0e0e0; padding: 15px 0 0 12px; }
.option span, .option small { display: block; }
.option small { font-size: 22.400px; letter-spacing: .42px; line-height: 30px; color: #777; margin-top: 12px; }
.mark { position: absolute; border: 8px solid #d0021b; border-radius: 5px; }
.mark-entity { left: 17px; top: 193px; width: 869px; height: 91px; }
.mark-drop { left: 239px; top: 276px; width: 525px; height: 182px; }
.fscroll { width: 29px; background: #fafafa; border-left: 2px solid #e6e6e6; padding: 2px 0 0 5px; }
.fscroll i { width: 16px; height: 486px; border-radius: 8px; background: #b6b6b6; }
.tray-foot { flex: 1; margin-top: 30px; border-top: 2px solid #aaa; background: #efefef; padding: 12px 0 0 12px; }
.enabled { width: 128px; height: 52px; border: 2px solid #bbb; border-radius: 4px; display: flex; align-items: center; padding-left: 16px; color: #555; font-size: 26px; }
.enabled span { margin: 2px 0 0 18px; }

/* sidebar */
.sidebar { flex: 1; background: #fff; border-top: 2px solid #bbb; display: flex; flex-direction: column; }
.stabs { height: 70px; flex: none; display: flex; padding: 6px 0 0 6px; background: linear-gradient(#aaa, #aaa) 0 68px / 100% 2px no-repeat; }
.stab { width: 266px; height: 64px; border: 2px solid #aaa; border-bottom: 0; background: #fff; display: flex; align-items: center; padding-left: 23px; color: #777; }
.stab b { color: #333; margin-left: 10px; }
.sbtn { width: 56px; height: 56px; margin: 2px 0 0 12px; border: 2px solid #bbb; display: flex; align-items: center; justify-content: center; color: #666; }
.sbtn.first { margin-left: 20px; }
.sbtn.on { background: #e6e6e6; border-bottom: 4px solid #999; color: #555; }
.scaret { margin: 27px 0 0 32px; color: #666; }
.sbar { height: 84px; flex: none; background: #efefef; border-bottom: 2px solid #ddd; display: flex; justify-content: flex-end; padding: 16px 40px 0 0; gap: 20px; }
.fbtn { height: 50px; border: 2px solid #bbb; background: #fff; display: flex; align-items: center; padding: 0 10px 0 14px; font-size: 26px; color: #777; }
.fbtn svg:last-child { margin-left: auto; }
.nodesf { width: 194px; } .nodesf span { margin-left: 5px; }
.allf { width: 120px; } .allf span { margin-left: 4px; }
.sbody { height: 1018px; flex: none; }
.sfoot { flex: 1; border-top: 2px solid #aaa; background: #efefef; display: flex; justify-content: flex-end; padding: 7px 12px 0 0; }
.monitor { width: 38px; height: 38px; border: 2px solid #bbb; background: #fff; color: #777; display: flex; align-items: center; justify-content: center; }
```
